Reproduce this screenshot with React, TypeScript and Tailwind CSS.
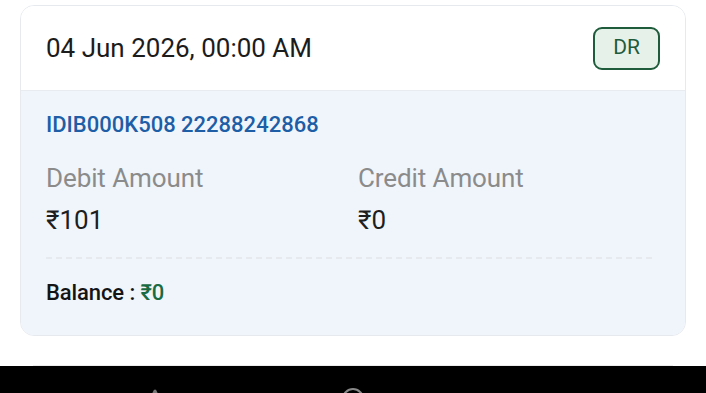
export default function App() {
  return (
    <div className="w-[706px] h-[393px] bg-white flex flex-col overflow-hidden font-['Roboto',sans-serif]">
      <div className="px-5 pt-[5px]">
        <div className="rounded-[14px] border border-[#e6e9ee] overflow-hidden">
          <div className="h-[84px] bg-white flex items-center justify-between pl-[25px] pr-[25px]">
            <span className="text-[26px] text-[#1c1c1c] leading-[32px]">04 Jun 2026, 00:00 AM</span>
            <span className="w-[67px] h-[43px] rounded-[9px] border-2 border-[#1f5c3c] bg-[#e6f1ea] flex items-center justify-center text-[21px] text-[#1f5c3c]">
              DR
            </span>
          </div>
          <div className="bg-[#f0f5fc] border-t border-[#e8ecf1] px-[25px] pt-[20px] pb-[28px]">
            <div className="text-[22px] font-medium text-[#1d5ea6] leading-[28px]">IDIB000K508 22288242868</div>
            <div className="grid grid-cols-[312px_1fr] mt-[23px]">
              <div className="flex flex-col">
                <span className="text-[26px] text-[#8b8b8b] leading-[32px] tracking-[-0.1px]">Debit Amount</span>
                <span className="text-[26px] text-[#1e1e1e] leading-[32px] mt-[10px]">₹101</span>
              </div>
              <div className="flex flex-col">
                <span className="text-[26px] text-[#8b8b8b] leading-[32px] tracking-[-0.1px]">Credit Amount</span>
                <span className="text-[26px] text-[#1e1e1e] leading-[32px] mt-[10px]">₹0</span>
              </div>
            </div>
            <div className="mt-[21px] mr-[8px] border-t-2 border-dashed border-[#e6eaef]" />
            <div className="mt-[20px] text-[22px] font-medium text-[#141414] leading-[28px] tracking-[-0.1px]">
              Balance : <span className="text-[#1a6b42]">₹0</span>
            </div>
          </div>
        </div>
      </div>
      <div className="flex-1" />
      <div className="mx-[33px] h-px bg-[#ececec]" />
      <div className="h-[27px] bg-black relative">
        <svg className="absolute left-[148px] top-[22px]" width="14" height="14" viewBox="0 0 14 14">
          <path d="M7 2 L2 12 M7 2 L12 12" stroke="#777" strokeWidth="2" fill="none" />
        </svg>
        <div className="absolute left-[342px] top-[22px] w-[22px] h-[22px] rounded-full border-2 border-[#888]" />
      </div>
    </div>
  )
}
